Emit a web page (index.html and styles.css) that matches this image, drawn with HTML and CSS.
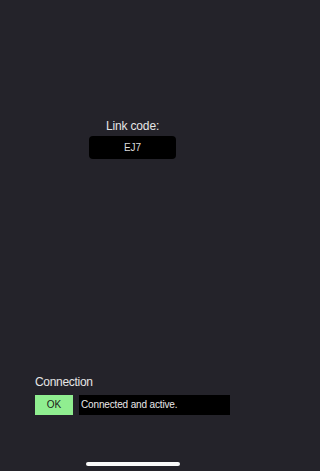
FILE: index.html
```html
<!DOCTYPE html>
<html lang="en">
<head>
<meta charset="utf-8">
<meta name="viewport" content="width=device-width, initial-scale=1">
<title>Link code</title>
<link rel="stylesheet" href="styles.css">
</head>
<body>
<div class="screen">
  <section class="link">
    <div class="link-label">Link code:</div>
    <div class="code-box">EJ7</div>
  </section>
  <section class="connection">
    <div class="conn-label">Connection</div>
    <div class="conn-row">
      <div class="status-ok">OK</div>
      <div class="status-text">Connected and active.</div>
    </div>
  </section>
  <div class="home-indicator"></div>
</div>
</body>
</html>
```

FILE: styles.css
```css
html, body {
  margin: 0;
  padding: 0;
  background: #24232a;
}

.screen {
  width: 265px;
  height: 471px;
  display: flex;
  flex-direction: column;
  font-family: "Liberation Sans", Arial, sans-serif;
  color: #e6e6e6;
  padding-bottom: 5px;
  box-sizing: border-box;
}

.link {
  padding-top: 119px;
  display: flex;
  flex-direction: column;
  align-items: center;
}

.link-label {
  font-size: 12px;
  line-height: 14px;
  letter-spacing: -0.15px;
}

.code-box {
  margin-top: 3px;
  width: 87px;
  height: 23px;
  line-height: 23px;
  background: #000;
  border-radius: 4px;
  text-align: center;
  font-size: 10px;
  color: #dcdcdc;
}

.connection {
  margin-top: auto;
  padding: 0 35px;
}

.conn-label {
  font-size: 12px;
  line-height: 14px;
  letter-spacing: -0.3px;
}

.conn-row {
  margin-top: 6px;
  display: flex;
  gap: 6px;
  height: 20px;
}

.status-ok {
  width: 38px;
  background: #90ee90;
  color: #1c1c1c;
  font-size: 10px;
  line-height: 20px;
  text-align: center;
}

.status-text {
  flex: 1;
  background: #000;
  color: #e8e8e8;
  font-size: 10px;
  line-height: 20px;
  padding-left: 2px;
  letter-spacing: -0.15px;
}

.home-indicator {
  margin: 47px auto 0;
  width: 94px;
  height: 4px;
  border-radius: 2px;
  background: #fafafa;
}
```
